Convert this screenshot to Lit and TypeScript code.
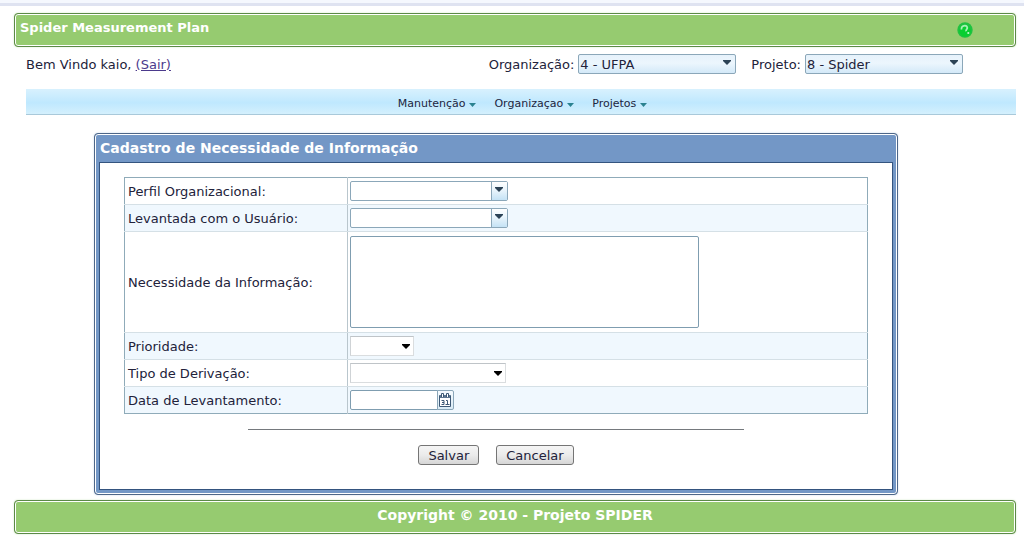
import { LitElement, html, css } from "lit";
import { customElement } from "lit/decorators.js";
import { classMap } from "lit/directives/class-map.js";

type Kind = "filled" | "combo" | "plain";

const arrow = html`<svg class="arrow" width="8" height="5" viewBox="0 0 8 5" aria-hidden="true">
  <path d="M0 0h8v1L4 5 0 1z" fill="currentColor" />
</svg>`;

const menuArrow = html`<svg width="7" height="4" viewBox="0 0 7 4" aria-hidden="true">
  <path d="M0 0h7L3.500 4z" fill="currentColor" />
</svg>`;

const helpIcon = html`<svg width="16" height="16" viewBox="0 0 16 16" aria-hidden="true">
  <circle cx="8" cy="8" r="7.7" fill="#1fc240" />
  <circle cx="8" cy="9" r="5.8" fill="#08cf30" />
  <path d="M4.600 7.500C3.500 3.600 9.800 2.200 10.300 5.600 10.600 7.400 8.200 7.600 9.300 9.200" fill="none" stroke="#a6f0b4" stroke-width="1.8" />
  <circle cx="11.300" cy="11" r="1.100" fill="#c8f7d0" />
</svg>`;

const calendarIcon = html`<svg width="12" height="14" viewBox="0 0 12 14" aria-hidden="true">
  <path d="M.5 2.500h11v11H.5z" fill="#fff" stroke="#3d5875" />
  <path d="M1 2h10v3H1z" fill="#5d7690" />
  <path d="M2.500 4V.5h2V4M7.500 4V.5h2V4" fill="#fff" stroke="#3d5875" />
  <path d="M2.500 7.500h2.500v4H2.500M3 9.500h2M7 7.500h1.500v4M6.500 11.500h4" fill="none" stroke="#3d5875" />
</svg>`;

@customElement("app-root")
class AppRoot extends LitElement {
  static styles = css`
    :host {
      display: block;
      font: 13px/16px "DejaVu Sans", Verdana, sans-serif;
      color: #22223a;
      background: #fff;
    }
    .strip { height: 3px; border-bottom: 3px solid #dfe3f1; background: #f5f8fe; }
    .page { padding: 7px 8px 9px 14px; }
    .bar {
      display: flex;
      box-sizing: border-box;
      height: 34px;
      padding: 0 42px 0 5px;
      border: 1px solid #5c8a47;
      border-radius: 4px;
      box-shadow: inset 0 0 0 1px #fff, 0 0 2px #cfe6c0;
      background: #96cb70;
      color: #fff;
      font-weight: bold;
      line-height: 28px;
    }
    .bar h1 { flex: 1; margin: 0; font-size: 13px; }
    .bar p { flex: 1; margin: 0; text-align: center; font-size: 14px; }
    footer.bar { padding: 0; }
    .help { align-self: center; display: flex; padding: 0; border: 0; background: none; }

    .user { display: flex; align-items: flex-start; gap: 15px; padding: 7px 53px 0 12px; line-height: 22px; }
    .who { flex: 1; }
    .user a { color: #4b3a8c; }
    .picker { display: flex; gap: 4px; }

    .select { display: inline-grid; align-items: center; line-height: 16px; }
    .select > * { grid-area: 1 / 1; }
    select {
      appearance: none;
      box-sizing: border-box;
      width: 100%;
      height: 20px;
      margin: 0;
      padding: 1px 20px 0 1px;
      font: inherit;
      color: inherit;
      border: 1px solid #8ba7b9;
      border-radius: 2px;
      background: #fff;
    }
    .user .select { align-self: flex-start; }
    .arrow { justify-self: end; margin-right: 5px; pointer-events: none; color: #2c4356; }
    .filled select { background: linear-gradient(#e6f2fb, #ecf6fd 45%, #d3e9f8); }
    .filled .arrow, .combo .arrow { margin-bottom: 4px; }
    .drop {
      justify-self: end;
      box-sizing: border-box;
      width: 16px;
      height: 18px;
      margin-right: 1px;
      border-left: 1px solid #8ba7b9;
      background: linear-gradient(#fff, #e6f3fb 50%, #c4e2f5);
      pointer-events: none;
    }
    .plain select { border-color: #bfc4c8 #dadddf #dadddf #cfd3d6; border-radius: 0; }
    .plain .arrow { color: #000; margin-right: 4px; margin-top: 1px; }
    .long { width: 158px; }
    .medium { width: 156px; }
    .short { width: 64px; }

    nav {
      display: flex;
      justify-content: center;
      gap: 18px;
      margin: 13px 0 0 12px;
      padding: 7px 0 2px 3px;
      border-bottom: 1px solid #a9c9da;
      background: linear-gradient(#d8f1fe, #bfe8fe 55%, #d4f0fd);
      font-size: 11px;
    }
    nav button {
      display: flex;
      align-items: center;
      gap: 4px;
      padding: 0;
      border: 0;
      background: none;
      font: inherit;
      color: #1c2540;
    }
    nav svg { color: #2a8290; margin-top: 2px; }

    main { display: flex; justify-content: center; padding: 18px 24px 5px 0; margin-left: -14px; }
    .panel {
      flex: 0 1 804px;
      box-sizing: border-box;
      padding: 0 4px 4px;
      border: 1px solid #4d6688;
      border-radius: 4px;
      box-shadow: inset 0 0 0 1px #fff, 0 0 2px #c5d3e6;
      background: #7397c6;
    }
    .panel h2 { margin: 0; padding: 1px 1px 0; font-size: 14px; line-height: 27px; color: #fff; }
    form { border: 1px solid #34547f; background: #fff; padding: 14px 24px 24px; }
    table { width: 100%; border-collapse: collapse; border: 1px solid #8fabb9; }
    th, td { text-align: left; font-weight: normal; border-bottom: 1px solid #d5e0e6; }
    td { height: 22px; padding: 2px; }
    th { width: 30%; box-sizing: border-box; padding: 4px 3px 2px; border-right: 1px solid #b9c6cd; }
    tr:last-child > * { border-bottom: 0; }
    tr:nth-child(even) { background: #f0f8fe; }
    td > * { vertical-align: middle; }
    textarea, .date input {
      display: block;
      box-sizing: border-box;
      margin: 0;
      border: 1px solid #7f9db0;
      border-radius: 2px;
      background: #fff;
      font: inherit;
    }
    textarea { width: 349px; max-width: 100%; height: 92px; margin: 2px 0; resize: none; }
    .date { display: flex; }
    .date input { width: 88px; height: 20px; border-radius: 2px 0 0 2px; }
    .date button {
      display: flex;
      align-items: center;
      justify-content: center;
      box-sizing: border-box;
      width: 17px;
      height: 20px;
      margin-left: -1px;
      padding: 0;
      border: 1px solid #8ba7b9;
      border-radius: 0 2px 2px 0;
      background: linear-gradient(#f6fbff, #d9ebf6);
    }
    hr { width: calc(100% * 2 / 3); margin: 15px auto; border: 0; border-top: 1px solid #75797d; }
    .actions { display: flex; justify-content: center; gap: 17px; }
    .actions button {
      box-sizing: border-box;
      height: 20px;
      padding: 1px 9px 0;
      border: 1px solid #757575;
      border-radius: 3px;
      background: linear-gradient(#f5f5f5, #ebebeb 50%, #d6d6d6);
      font: inherit;
      color: #22223a;
    }
  `;

  select(id: string, kind: Kind, size: string, value = "") {
    return html`<span class=${classMap({ select: true, [kind]: true, [size]: true })}>
      <select id=${id}><option>${value}</option></select>
      ${kind === "combo" ? html`<span class="drop"></span>` : ""}
      ${arrow}
    </span>`;
  }

  row(id: string, label: string, control: unknown) {
    return html`<tr><th scope="row"><label for=${id}>${label}</label></th><td>${control}</td></tr>`;
  }

  render() {
    return html`
      <div class="strip"></div>
      <div class="page">
        <header class="bar">
          <h1>Spider Measurement Plan</h1>
          <button class="help" aria-label="Ajuda">${helpIcon}</button>
        </header>
        <div class="user">
          <span class="who">Bem Vindo kaio, <a href="#">(Sair)</a></span>
          <span class="picker"><label for="organizacao">Organização:</label>${this.select("organizacao", "filled", "long", "4 - UFPA")}</span>
          <span class="picker"><label for="projeto">Projeto:</label>${this.select("projeto", "filled", "long", "8 - Spider")}</span>
        </div>
        <nav>
          ${["Manutenção", "Organizaçao", "Projetos"].map((m) => html`<button>${m}${menuArrow}</button>`)}
        </nav>
        <main>
          <section class="panel">
            <h2>Cadastro de Necessidade de Informação</h2>
            <form>
              <table>
                <tbody>
                  ${this.row("perfil", "Perfil Organizacional:", this.select("perfil", "combo", "long"))}
                  ${this.row("usuario", "Levantada com o Usuário:", this.select("usuario", "combo", "long"))}
                  ${this.row("necessidade", "Necessidade da Informação:", html`<textarea id="necessidade"></textarea>`)}
                  ${this.row("prioridade", "Prioridade:", this.select("prioridade", "plain", "short"))}
                  ${this.row("derivacao", "Tipo de Derivação:", this.select("derivacao", "plain", "medium"))}
                  ${this.row("data", "Data de Levantamento:", html`<span class="date">
                    <input id="data" type="text" />
                    <button type="button" aria-label="Calendário">${calendarIcon}</button>
                  </span>`)}
                </tbody>
              </table>
              <hr />
              <div class="actions">
                <button type="button">Salvar</button>
                <button type="button">Cancelar</button>
              </div>
            </form>
          </section>
        </main>
        <footer class="bar"><p>Copyright © 2010 - Projeto SPIDER</p></footer>
      </div>
    `;
  }
}
